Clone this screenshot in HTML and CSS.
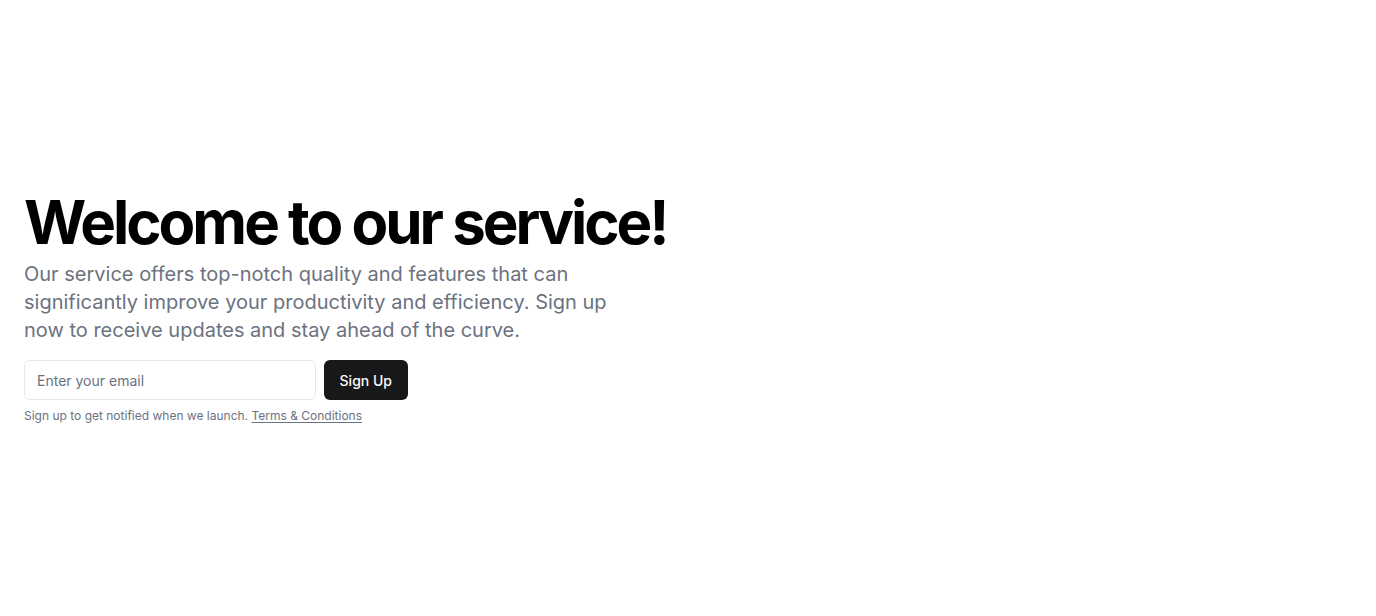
FILE: index.html
```html
<!DOCTYPE html>
<html lang="en">
<head>
<meta charset="utf-8">
<title>Welcome</title>
<link rel="stylesheet" href="styles.css">
</head>
<body>
<main class="hero">
  <div class="container">
    <div class="intro">
      <h1 class="title">Welcome to our service!</h1>
      <p class="lead">Our service offers top-notch quality and features that can significantly improve your productivity and efficiency. Sign up now to receive updates and stay ahead of the curve.</p>
    </div>
    <div class="signup">
      <form class="signup-form">
        <input class="email" type="email" placeholder="Enter your email">
        <button class="btn" type="submit">Sign Up</button>
      </form>
      <p class="note">Sign up to get notified when we launch. <a class="link" href="#">Terms &amp; Conditions</a></p>
    </div>
  </div>
</main>
</body>
</html>
```
FILE: styles.css
```css
* { box-sizing: border-box; }
html, body { margin: 0; padding: 0; }
body {
  font-family: Inter, "Noto Sans", sans-serif;
  background: #ffffff;
  color: #000;
}
.hero {
  min-height: 100vh;
  display: flex;
  align-items: center;
}
.container {
  width: 100%;
  padding: 0 24px;
  display: flex;
  flex-direction: column;
  gap: 16px;
}
.intro {
  display: flex;
  flex-direction: column;
  gap: 8px;
}
.title {
  margin: 0;
  font-size: 60px;
  line-height: 1;
  font-weight: 700;
  letter-spacing: -0.05em;
  color: #000;
}
.lead {
  margin: 0;
  max-width: 600px;
  font-size: 20px;
  line-height: 28px;
  color: #6b7280;
}
.signup {
  display: flex;
  flex-direction: column;
  gap: 8px;
  max-width: 384px;
}
.signup-form {
  display: flex;
  gap: 8px;
  margin: 0;
}
.email {
  flex: 1;
  min-width: 0;
  height: 40px;
  border: 1px solid #e5e7eb;
  border-radius: 6px;
  padding: 8px 12px;
  font-family: inherit;
  font-size: 14px;
  color: #111827;
  background: #fff;
  outline: none;
}
.email::placeholder { color: #6b7280; }
.btn {
  height: 40px;
  padding: 0 16px;
  border: none;
  border-radius: 6px;
  background: #18181b;
  color: #fafafa;
  font-family: inherit;
  font-size: 14px;
  font-weight: 500;
  cursor: pointer;
}
.note {
  margin: 0;
  font-size: 12px;
  line-height: 16px;
  color: #6b7280;
}
.link {
  color: #6b7280;
  text-decoration: underline;
  text-underline-offset: 2px;
}
```
